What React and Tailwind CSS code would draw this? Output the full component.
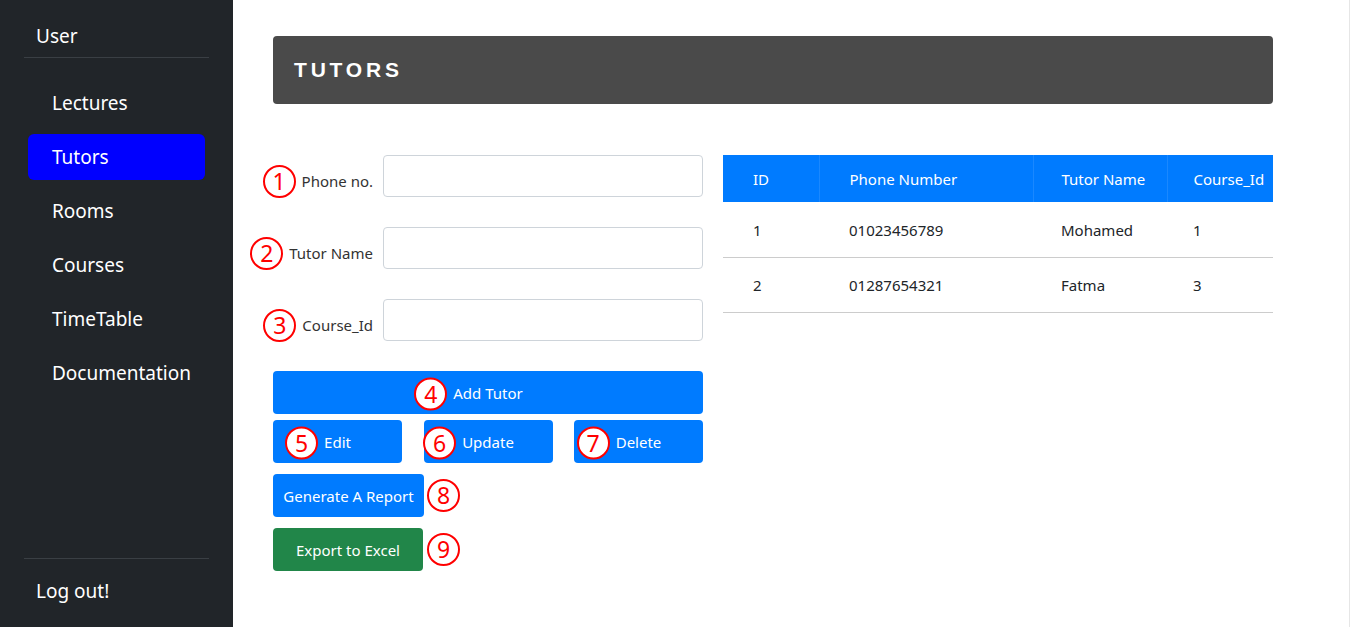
import React from 'react';

const navItems = ['Lectures', 'Tutors', 'Rooms', 'Courses', 'TimeTable', 'Documentation'];

const tutors = [
  { id: 1, phone: '01023456789', name: 'Mohamed', course: 1 },
  { id: 2, phone: '01287654321', name: 'Fatma', course: 3 },
];

const Mark = ({ n, className = '' }) => (
  <span
    className={
      'flex items-center justify-center w-[33px] h-[33px] rounded-full border-2 border-[#ff0000] bg-white text-[#ff0000] text-[23px] leading-none shrink-0 ' +
      className
    }
  >
    {n}
  </span>
);

const Field = ({ n, label }) => (
  <div className="flex items-start gap-[10px]">
    <div className="w-[100px] h-[42px] pt-[10px] flex items-center justify-end gap-[6px]">
      <Mark n={n} />
      <span className="text-[15px] text-[#333] whitespace-nowrap">{label}</span>
    </div>
    <input className="w-[320px] h-[42px] border border-[#ced4da] rounded-[4px] bg-white px-3 outline-none" />
  </div>
);

const BlueButton = ({ n, label, className = '' }) => (
  <button className={'h-[43px] pt-[2px] bg-[#007bff] text-white text-[15px] rounded-[4px] flex items-center justify-center ' + className}>
    <span className="relative">
      <Mark n={n} className="absolute right-full mr-[6px] top-1/2 -translate-y-1/2" />
      {label}
    </span>
  </button>
);

export default function App() {
  return (
    <div className="flex h-[627px] bg-white font-['Noto_Sans',sans-serif] text-[#212529]">
      {/* sidebar */}
      <aside className="w-[233px] shrink-0 bg-[#212529] text-white flex flex-col px-[24px]">
        <div className="pt-[22px] pb-[7px] pl-[12px] border-b border-[#3a3f44] text-[19px] leading-[28px]">User</div>
        <nav className="flex flex-col gap-[8px] px-[4px] pt-[22px]">
          {navItems.map((item) => (
            <a
              key={item}
              className={
                'h-[46px] pl-[24px] flex items-center rounded-[6px] text-[19px] ' +
                (item === 'Tutors' ? 'bg-[#0000ff]' : '')
              }
            >
              {item}
            </a>
          ))}
        </nav>
        <div className="mt-auto border-t border-[#3a3f44] pl-[12px] pb-[4px] h-[69px] flex items-center text-[19px]">Log out!</div>
      </aside>

      {/* main */}
      <main className="flex-1 pl-[40px] pt-[36px] border-r border-[#e6e6e6]">
        <div className="w-[1000px] h-[68px] bg-[#4a4a4a] rounded-[4px] flex items-center pl-[21px]">
          <h1 className="font-['Liberation_Sans',Arial,sans-serif] font-bold text-white text-[21px] tracking-[3.8px]">TUTORS</h1>
        </div>

        <div className="flex gap-[20px] mt-[51px]">
          {/* form */}
          <div className="w-[430px] flex flex-col">
            <div className="flex flex-col gap-[30px]">
              <Field n="1" label="Phone no." />
              <Field n="2" label="Tutor Name" />
              <Field n="3" label="Course_Id" />
            </div>
            <BlueButton n="4" label="Add Tutor" className="w-[430px] mt-[30px]" />
            <div className="flex justify-between mt-[6px]">
              <BlueButton n="5" label="Edit" className="w-[129px]" />
              <BlueButton n="6" label="Update" className="w-[129px]" />
              <BlueButton n="7" label="Delete" className="w-[129px]" />
            </div>
            <div className="flex items-center gap-[3px] mt-[11px]">
              <button className="h-[43px] pt-[2px] w-[151px] bg-[#007bff] text-white text-[15px] rounded-[4px] whitespace-nowrap">
                Generate A Report
              </button>
              <Mark n="8" />
            </div>
            <div className="flex items-center gap-[4px] mt-[11px]">
              <button className="h-[43px] pt-[2px] w-[150px] bg-[#218649] text-white text-[15px] rounded-[4px]">Export to Excel</button>
              <Mark n="9" />
            </div>
          </div>

          {/* table */}
          <table className="w-[550px] h-fit border-collapse text-[15px] self-start">
            <thead>
              <tr className="bg-[#007bff] text-white h-[47px]">
                <th className="w-[96px] pl-[30px] pt-[2px] text-left font-normal">ID</th>
                <th className="w-[214px] pl-[30px] pt-[2px] text-left font-normal border-l border-[#1a88ff]">Phone Number</th>
                <th className="w-[134px] pl-[28px] pt-[2px] text-left font-normal border-l border-[#1a88ff]">Tutor Name</th>
                <th className="pl-[26px] pt-[2px] text-left font-normal border-l border-[#1a88ff]">Course_Id</th>
              </tr>
            </thead>
            <tbody>
              {tutors.map((t) => (
                <tr key={t.id} className="h-[55px] border-b border-[#cccccc]">
                  <td className="pl-[30px] pt-[2px]">{t.id}</td>
                  <td className="pl-[30px] pt-[2px]">{t.phone}</td>
                  <td className="pl-[28px] pt-[2px]">{t.name}</td>
                  <td className="pl-[26px] pt-[2px]">{t.course}</td>
                </tr>
              ))}
            </tbody>
          </table>
        </div>
      </main>
    </div>
  );
}
